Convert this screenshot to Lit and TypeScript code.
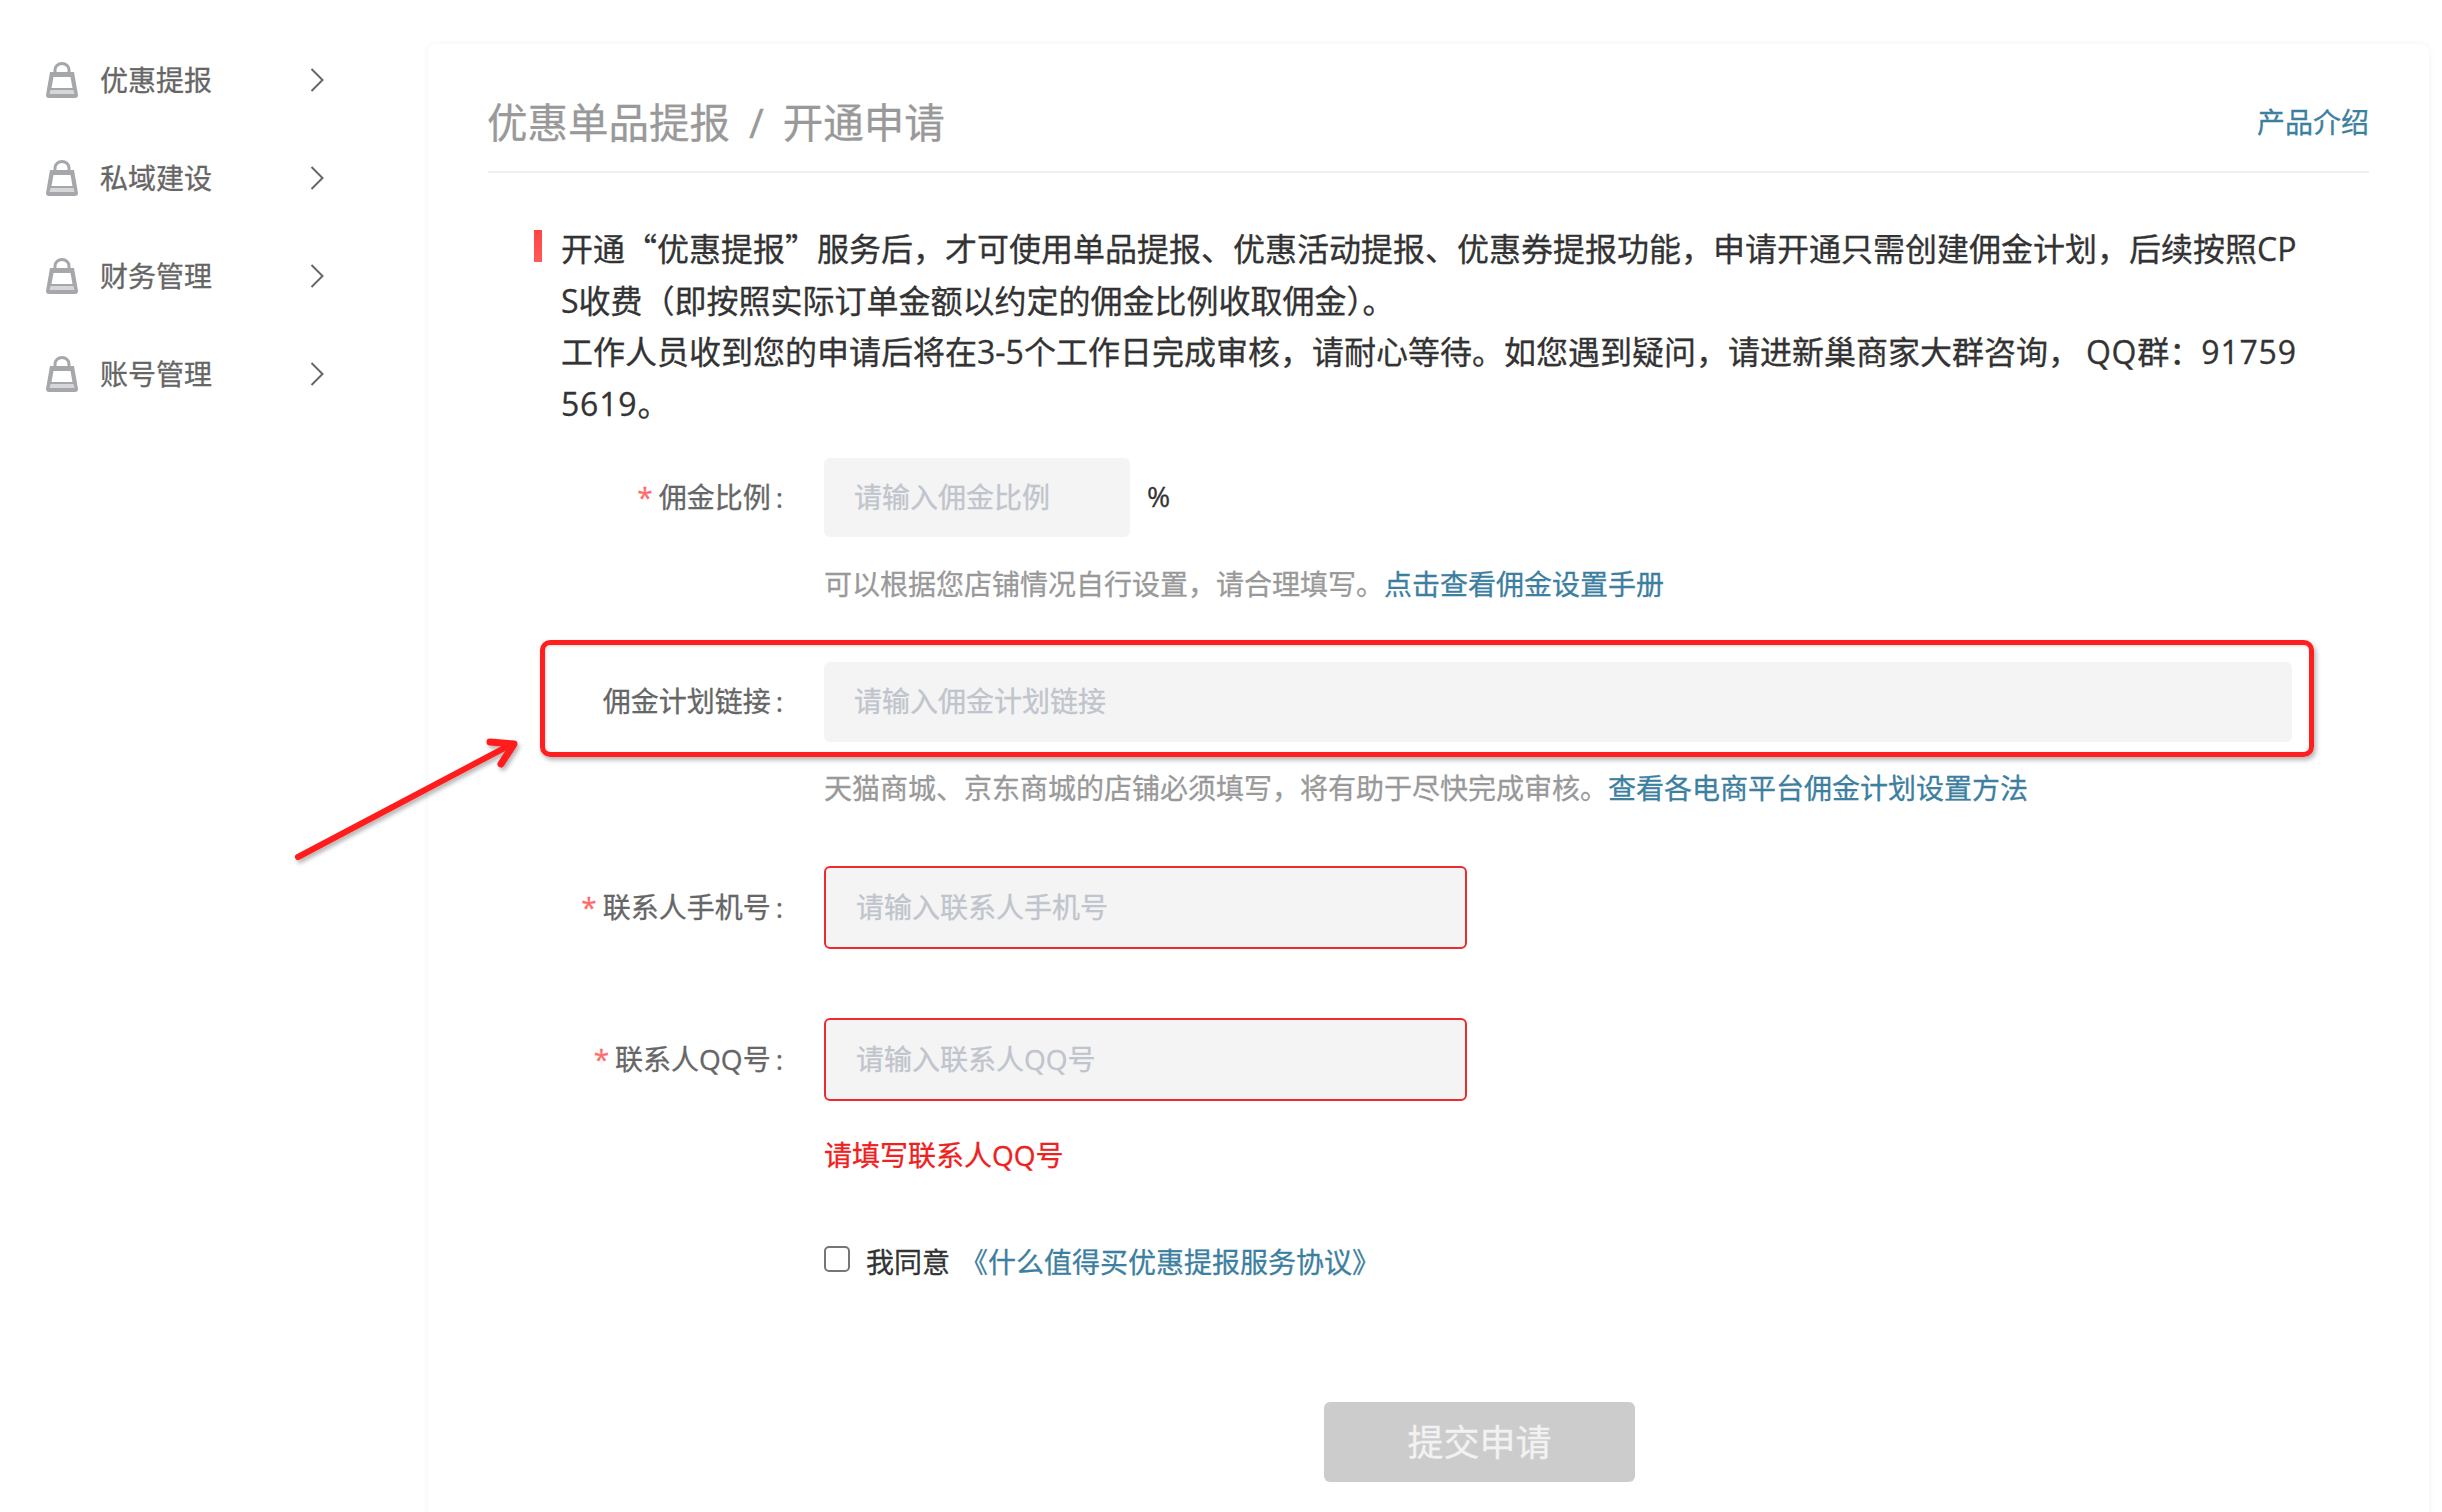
import { LitElement, html, css, svg } from "lit";
import { customElement } from "lit/decorators.js";

const bag = html`<svg class="bag" width="32" height="36" viewBox="0 0 32 36">
  <path d="M9 12V8a7 6.5 0 0 1 14 0v4" fill="none" stroke="#a5a7ab" stroke-width="3"/>
  <path d="M4 10H28L32 33a3 3 0 0 1-3 3H3a3 3 0 0 1-3-3Z" fill="#a5a7ab"/>
  <path d="M7.5 15H24.5L26.5 26H5.5Z" fill="#fff"/>
  <path d="M4.5 28H27.5L28.5 32H3.5Z" fill="#d6d7d9"/>
</svg>`;
const chev = html`<svg class="chev" width="14" height="24" viewBox="0 0 14 24"><path d="M1.5 1L12.5 12L1.5 23" fill="none" stroke="#666" stroke-width="2"/></svg>`;

@customElement("app-root")
export class AppRoot extends LitElement {
  static styles = css`
    :host { display: flex; width: 2442px; height: 1512px; overflow: hidden; background: #fff; position: relative;
      font-family: "Open Sans", "Noto Sans CJK SC", sans-serif; font-size: 28px; color: #333; -webkit-text-stroke: 0.3px currentColor; }
    * { box-sizing: border-box; }
    .side { width: 428px; flex: none; padding-top: 31px; }
    .item { display: flex; align-items: center; height: 98px; padding-left: 46px; color: #666; }
    .item span { width: 112px; margin-left: 22px; padding-bottom: 3px; white-space: nowrap; }
    .chev { margin-left: 98px; }
    .panel { flex: none; width: 2001px; margin-top: 44px; height: 1600px; padding: 0 60px 0 59px;
      border-radius: 8px 8px 0 0; box-shadow: 0 0 6px rgba(170,185,215,.16); background: #fff; }
    .head { display: flex; justify-content: space-between; align-items: center; height: 129px; padding-top: 26px;
      margin-left: 1px; border-bottom: 2px solid #f0f0f0; }
    .title { font-size: 40.5px; color: #999; white-space: nowrap; margin-left: -1px; }
    .title i { font-style: normal; margin: 0 19px; }
    a { color: #3d7f9f; text-decoration: none; }
    .notice { position: relative; margin: 49px 0 0 74px; width: 1742px; font-family: "Noto Sans CJK SC", sans-serif;
      font-size: 32px; line-height: 51.5px; color: #333; word-break: break-all; }
    .notice::before { content: ""; position: absolute; left: -27px; top: 8px; width: 8px; height: 32px;
      background: linear-gradient(#f44, #ff5a5a); }
    .lat { font-family: "Open Sans", sans-serif; line-height: 1; }
    .wide { letter-spacing: .8px; }
    .qq { margin-left: 6px; }
    .row { display: flex; align-items: center; position: relative; }
    .label { width: 298px; margin-right: 39px; padding-bottom: 4px; text-align: right; color: #666; white-space: nowrap; }
    .label b { font-weight: 400; color: #ff6b6b; margin-right: 6px; }
    .label em { font-style: normal; margin: 0 2px 0 5px; }
    input.text { border: 0; background: #f4f4f4; border-radius: 6px; padding: 0 30px 2px; font: inherit; outline: none; color: #333; }
    input.text::placeholder { color: #c0c4cc; opacity: 1; }
    .err { border: 2px solid #ee2b2b !important; }
    .pct { margin-left: 17px; padding-bottom: 3px; }
    .hint { margin-left: 337px; line-height: 40px; color: #999; white-space: nowrap; }
    .error { margin: 34px 0 0 337px; line-height: 40px; color: #ee2020; }
    .check { display: flex; align-items: center; height: 40px; margin: 66px 0 0 337px; white-space: nowrap; }
    .check input { appearance: none; width: 26px; height: 26px; margin: 0 16px 0 0; border: 2px solid #767676; border-radius: 5px; background: #fff; position: relative; top: -2px; }
    .check a { margin-left: 10px; }
    .btn { display: block; margin: 121px 0 0 837px; width: 311px; height: 80px; border: 0; padding: 0 0 4px; border-radius: 6px;
      background: #ccc; color: #f2f2f2; font: inherit; font-size: 36px; }
    .mark { position: absolute; left: 53px; top: -22px; width: 1774px; height: 117px; border: 5px solid #ff1f1f; border-radius: 10px;
      box-shadow: 2px 3px 5px rgba(0,0,0,.3), inset 1px 1px 3px rgba(0,0,0,.15); pointer-events: none; }
    .arrow { position: absolute; left: 280px; top: 720px; overflow: visible; pointer-events: none; }
  `;

  render() {
    const items = ["优惠提报", "私域建设", "财务管理", "账号管理"];
    return html`
      <nav class="side">
        ${items.map((t) => html`<div class="item">${bag}<span>${t}</span>${chev}</div>`)}
      </nav>
      <main class="panel">
        <header class="head">
          <div class="title">优惠单品提报<i>/</i>开通申请</div>
          <a href="#">产品介绍</a>
        </header>
        <div class="notice">开通“优惠提报”服务后，才可使用单品提报、优惠活动提报、优惠券提报功能，申请开通只需创建佣金计划，后续按照<span class="lat">CPS</span>收费（即按照实际订单金额以约定的佣金比例收取佣金）。<br />工作人员收到您的申请后将在<span class="lat">3-5</span>个工作日完成审核，请耐心等待。如您遇到疑问，请进新巢商家大群咨询，<span class="lat wide qq">QQ</span>群：<span class="lat wide">917595619</span>。</div>

        <div class="row" style="margin-top:30px">
          <label class="label"><b>*</b>佣金比例<em>:</em></label>
          <input class="text" style="width:306px;height:79px" placeholder="请输入佣金比例" />
          <span class="pct">%</span>
        </div>
        <div class="hint" style="margin-top:27px">可以根据您店铺情况自行设置，请合理填写。<a href="#">点击查看佣金设置手册</a></div>

        <div class="row" style="margin-top:58px">
          <label class="label">佣金计划链接<em>:</em></label>
          <input class="text" style="width:1468px;height:80px" placeholder="请输入佣金计划链接" />
          <div class="mark"></div>
        </div>
        <div class="hint" style="margin-top:26px">天猫商城、京东商城的店铺必须填写，将有助于尽快完成审核。<a href="#">查看各电商平台佣金计划设置方法</a></div>

        <div class="row" style="margin-top:58px">
          <label class="label"><b>*</b>联系人手机号<em>:</em></label>
          <input class="text err" style="width:643px;height:83px" placeholder="请输入联系人手机号" />
        </div>
        <div class="row" style="margin-top:69px">
          <label class="label"><b>*</b>联系人QQ号<em>:</em></label>
          <input class="text err" style="width:643px;height:83px" placeholder="请输入联系人QQ号" />
        </div>
        <div class="error">请填写联系人QQ号</div>
        <div class="check"><input type="checkbox" /><span>我同意</span><a href="#">《什么值得买优惠提报服务协议》</a></div>
        <button class="btn">提交申请</button>
      </main>
      <svg class="arrow" width="240" height="140" viewBox="0 0 240 140">
        <defs><filter id="s" x="-20%" y="-20%" width="140%" height="140%"><feDropShadow dx="2" dy="3" stdDeviation="2" flood-color="#000" flood-opacity=".3"/></filter></defs>
        ${svg`<g filter="url(#s)" fill="none" stroke="#ff1f1f" stroke-linecap="round" stroke-linejoin="round">
          <path d="M18 137L232 24" stroke-width="6"/>
          <path d="M210 22L234 24L221 44" stroke-width="7"/>
        </g>`}
      </svg>
    `;
  }
}
